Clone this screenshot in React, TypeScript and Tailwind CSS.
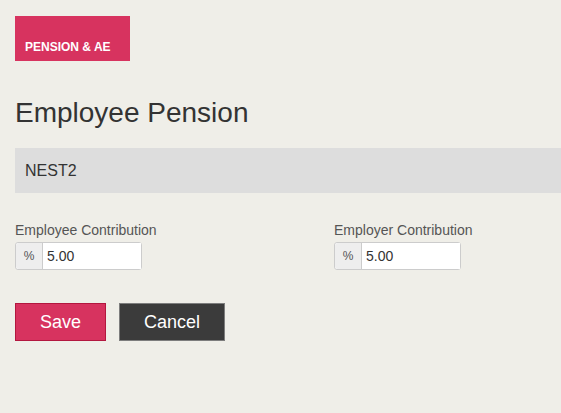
export default function App() {
  return (
    <div className="min-h-[413px] w-full overflow-hidden bg-[#efeee8] font-['Liberation_Sans',Arial,sans-serif]">
      <div className="w-[638px] px-[15px] pt-4">
        {/* Section badge */}
        <div className="h-[45px] w-[115px] bg-[#d7335f] pl-[10px] pt-[25px]">
          <span className="block text-[12px] leading-[13px] font-bold text-white">PENSION &amp; AE</span>
        </div>

        <h1 className="mt-9 text-[28px] leading-[31px] text-[#333]">Employee Pension</h1>

        {/* Scheme name bar */}
        <div className="mt-5 flex h-[45px] items-center bg-[#dddddd] px-[10px] text-[16px] text-[#333]">
          NEST2
        </div>

        <div className="mt-[27px] grid grid-cols-2">
          <ContributionField label="Employee Contribution" value="5.00" />
          <div className="pl-[15px]">
            <ContributionField label="Employer Contribution" value="5.00" />
          </div>
        </div>

        <div className="mt-[33px] flex gap-[13px]">
          <button className="h-[38px] border border-[#b3173f] bg-[#d7335f] px-6 text-[18px] text-white">
            Save
          </button>
          <button className="h-[38px] border border-[#7d7d7d] bg-[#3b3b3b] px-6 text-[18px] text-white">
            Cancel
          </button>
        </div>
      </div>
    </div>
  );
}

function ContributionField({ label, value }: { label: string; value: string }) {
  return (
    <div>
      <label className="block text-[14px] leading-5 text-[#555]">{label}</label>
      <div className="mt-[2px] flex h-[28px] w-[127px] rounded-[3px] border border-[#cccccc] bg-white">
        <span className="flex w-[27px] shrink-0 items-center justify-center rounded-l-[3px] border-r border-[#cccccc] bg-[#eeeeee] text-[12px] text-[#555]">
          %
        </span>
        <input
          className="w-full min-w-0 bg-white px-[4px] text-[14px] text-[#333] outline-none"
          defaultValue={value}
        />
      </div>
    </div>
  );
}
